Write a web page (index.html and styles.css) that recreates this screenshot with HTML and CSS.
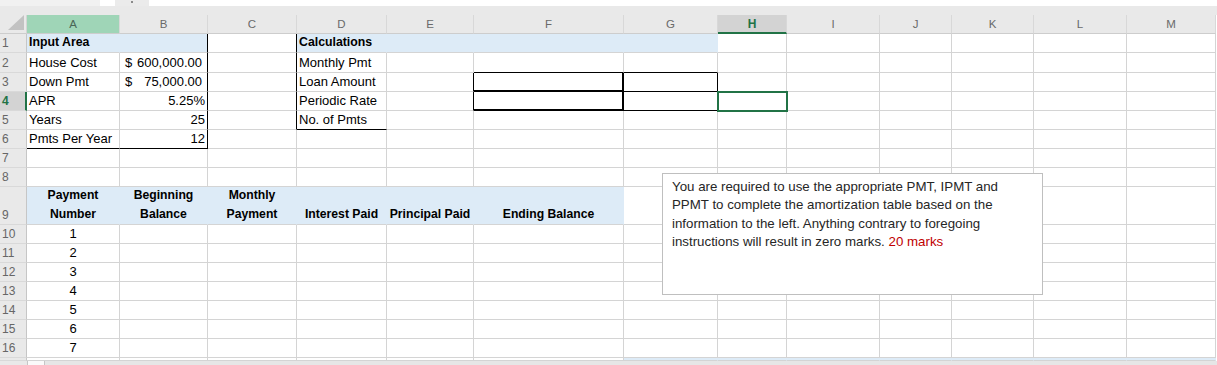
FILE: index.html
```html
<!DOCTYPE html>
<html lang="en">
<head>
  <meta charset="UTF-8">
  <meta name="viewport" content="width=device-width, initial-scale=1.0">
  <title>Amortization Table</title>
  <link rel="stylesheet" href="styles.css">
</head>
<body>
  <div class="formula-edge">
    <div class="name-box"></div>
    <div class="fx-gap"></div>
    <div class="fx-btn"><span></span></div>
  </div>
  <div class="band"></div>

  <div class="sheet">
    <!-- column headers -->
    <div class="corner"><div class="tri"></div></div>
    <div class="colhead picked">A</div>
    <div class="colhead">B</div>
    <div class="colhead">C</div>
    <div class="colhead">D</div>
    <div class="colhead">E</div>
    <div class="colhead">F</div>
    <div class="colhead">G</div>
    <div class="colhead active">H</div>
    <div class="colhead">I</div>
    <div class="colhead">J</div>
    <div class="colhead">K</div>
    <div class="colhead">L</div>
    <div class="colhead">M</div>

    <!-- row 1 -->
    <div class="rowhead">1</div>
    <div class="cell fill bold">Input Area</div>
    <div class="cell fill br"></div>
    <div class="cell br"></div>
    <div class="cell fill bold">Calculations</div>
    <div class="cell fill"></div>
    <div class="cell fill"></div>
    <div class="cell fill"></div>
    <div class="cell"></div>
    <div class="cell"></div>
    <div class="cell"></div>
    <div class="cell"></div>
    <div class="cell"></div>
    <div class="cell"></div>

    <!-- row 2 -->
    <div class="rowhead">2</div>
    <div class="cell">House Cost</div>
    <div class="cell acct br"><span>$</span><span>600,000.00</span></div>
    <div class="cell br"></div>
    <div class="cell">Monthly Pmt</div>
    <div class="cell"></div>
    <div class="cell bb"></div>
    <div class="cell bb"></div>
    <div class="cell"></div>
    <div class="cell"></div>
    <div class="cell"></div>
    <div class="cell"></div>
    <div class="cell"></div>
    <div class="cell"></div>

    <!-- row 3 -->
    <div class="rowhead">3</div>
    <div class="cell">Down Pmt</div>
    <div class="cell acct br"><span>$</span><span>75,000.00</span></div>
    <div class="cell br"></div>
    <div class="cell">Loan Amount</div>
    <div class="cell br"></div>
    <div class="cell br bb thick"></div>
    <div class="cell br bb"></div>
    <div class="cell"></div>
    <div class="cell"></div>
    <div class="cell"></div>
    <div class="cell"></div>
    <div class="cell"></div>
    <div class="cell"></div>

    <!-- row 4 -->
    <div class="rowhead active">4</div>
    <div class="cell">APR</div>
    <div class="cell num br">5.25%</div>
    <div class="cell br"></div>
    <div class="cell">Periodic Rate</div>
    <div class="cell br"></div>
    <div class="cell br bb thick"></div>
    <div class="cell br bb"></div>
    <div class="cell selected"></div>
    <div class="cell"></div>
    <div class="cell"></div>
    <div class="cell"></div>
    <div class="cell"></div>
    <div class="cell"></div>

    <!-- row 5 -->
    <div class="rowhead">5</div>
    <div class="cell">Years</div>
    <div class="cell num br">25</div>
    <div class="cell br"></div>
    <div class="cell bb">No. of Pmts</div>
    <div class="cell"></div>
    <div class="cell"></div>
    <div class="cell"></div>
    <div class="cell"></div>
    <div class="cell"></div>
    <div class="cell"></div>
    <div class="cell"></div>
    <div class="cell"></div>
    <div class="cell"></div>

    <!-- row 6 -->
    <div class="rowhead">6</div>
    <div class="cell bb">Pmts Per Year</div>
    <div class="cell num br bb">12</div>
    <div class="cell"></div>
    <div class="cell"></div>
    <div class="cell"></div>
    <div class="cell"></div>
    <div class="cell"></div>
    <div class="cell"></div>
    <div class="cell"></div>
    <div class="cell"></div>
    <div class="cell"></div>
    <div class="cell"></div>
    <div class="cell"></div>

    <!-- row 7 -->
    <div class="rowhead">7</div>
    <div class="cell"></div>
    <div class="cell"></div>
    <div class="cell"></div>
    <div class="cell"></div>
    <div class="cell"></div>
    <div class="cell"></div>
    <div class="cell"></div>
    <div class="cell"></div>
    <div class="cell"></div>
    <div class="cell"></div>
    <div class="cell"></div>
    <div class="cell"></div>
    <div class="cell"></div>

    <!-- row 8 -->
    <div class="rowhead">8</div>
    <div class="cell"></div>
    <div class="cell"></div>
    <div class="cell"></div>
    <div class="cell"></div>
    <div class="cell"></div>
    <div class="cell"></div>
    <div class="cell"></div>
    <div class="cell"></div>
    <div class="cell"></div>
    <div class="cell"></div>
    <div class="cell"></div>
    <div class="cell"></div>
    <div class="cell"></div>

    <!-- row 9: table headings -->
    <div class="rowhead">9</div>
    <div class="cell fill heading">Payment<br>Number</div>
    <div class="cell fill heading">Beginning<br>Balance</div>
    <div class="cell fill heading">Monthly<br>Payment</div>
    <div class="cell fill heading">Interest Paid</div>
    <div class="cell fill heading">Principal Paid</div>
    <div class="cell fill heading">Ending Balance</div>
    <div class="cell"></div>
    <div class="cell"></div>
    <div class="cell"></div>
    <div class="cell"></div>
    <div class="cell"></div>
    <div class="cell"></div>
    <div class="cell"></div>

    <!-- rows 10-16 -->
    <div class="rowhead">10</div>
    <div class="cell center">1</div>
    <div class="cell"></div><div class="cell"></div><div class="cell"></div><div class="cell"></div><div class="cell"></div>
    <div class="cell"></div><div class="cell"></div><div class="cell"></div><div class="cell"></div><div class="cell"></div><div class="cell"></div><div class="cell"></div>

    <div class="rowhead">11</div>
    <div class="cell center">2</div>
    <div class="cell"></div><div class="cell"></div><div class="cell"></div><div class="cell"></div><div class="cell"></div>
    <div class="cell"></div><div class="cell"></div><div class="cell"></div><div class="cell"></div><div class="cell"></div><div class="cell"></div><div class="cell"></div>

    <div class="rowhead">12</div>
    <div class="cell center">3</div>
    <div class="cell"></div><div class="cell"></div><div class="cell"></div><div class="cell"></div><div class="cell"></div>
    <div class="cell"></div><div class="cell"></div><div class="cell"></div><div class="cell"></div><div class="cell"></div><div class="cell"></div><div class="cell"></div>

    <div class="rowhead">13</div>
    <div class="cell center">4</div>
    <div class="cell"></div><div class="cell"></div><div class="cell"></div><div class="cell"></div><div class="cell"></div>
    <div class="cell"></div><div class="cell"></div><div class="cell"></div><div class="cell"></div><div class="cell"></div><div class="cell"></div><div class="cell"></div>

    <div class="rowhead">14</div>
    <div class="cell center">5</div>
    <div class="cell"></div><div class="cell"></div><div class="cell"></div><div class="cell"></div><div class="cell"></div>
    <div class="cell"></div><div class="cell"></div><div class="cell"></div><div class="cell"></div><div class="cell"></div><div class="cell"></div><div class="cell"></div>

    <div class="rowhead">15</div>
    <div class="cell center">6</div>
    <div class="cell"></div><div class="cell"></div><div class="cell"></div><div class="cell"></div><div class="cell"></div>
    <div class="cell"></div><div class="cell"></div><div class="cell"></div><div class="cell"></div><div class="cell"></div><div class="cell"></div><div class="cell"></div>

    <div class="rowhead">16</div>
    <div class="cell center">7</div>
    <div class="cell"></div><div class="cell"></div><div class="cell"></div><div class="cell"></div><div class="cell"></div>
    <div class="cell"></div><div class="cell"></div><div class="cell"></div><div class="cell"></div><div class="cell"></div><div class="cell"></div><div class="cell"></div>

    <!-- row 17 (cut off) -->
    <div class="rowhead"></div>
    <div class="cell"></div><div class="cell"></div><div class="cell"></div><div class="cell"></div><div class="cell"></div><div class="cell"></div>
    <div class="cell fill"></div><div class="cell fill"></div><div class="cell fill"></div><div class="cell fill"></div>
    <div class="cell fill"></div><div class="cell fill"></div><div class="cell fill"></div>
  </div>

  <div class="hscroll">
    <div class="hscroll-side"></div>
    <div class="tab-btn"></div>
    <div class="hscroll-bar"></div>
  </div>

  <div class="note">
    You are required to use the appropriate PMT, IPMT and<br>
    PPMT to complete the amortization table based on the<br>
    information to the left. Anything contrary to foregoing<br>
    instructions will result in zero marks. <span class="red">20 marks</span>
  </div>
</body>
</html>
```

FILE: styles.css
```css
body {
  margin: 0;
  width: 1217px;
  height: 365px;
  overflow: hidden;
  position: relative;
  background-color: #fff;
  font-family: "Liberation Sans", Arial, sans-serif;
  color: #000;
}

.formula-edge {
  display: flex;
  height: 6px;
  background-color: #fff;
}

.name-box {
  width: 100px;
  background-color: #f1f1f1;
}

.fx-gap {
  width: 15px;
}

.fx-btn {
  width: 34px;
  background-color: #ebebeb;
  display: flex;
  justify-content: center;
}

.fx-btn span {
  width: 2px;
  height: 2px;
  margin-top: 1px;
  background-color: #8a8a8a;
}

.band {
  height: 9px;
  background-color: #e9e9e9;
}

.sheet {
  display: grid;
  grid-template-columns: 27px 93px 88px 89px 90px 87px 150px 94px 69px 93px 72px 82px 93px 89px;
  grid-template-rows: 19px 19px 20px repeat(6, 19px) 38px repeat(7, 19px) 3px;
}

.corner {
  background-color: #e9e9e9;
  border-right: 1px solid #d5d5d5;
  border-bottom: 1px solid #cdcdcd;
  display: flex;
  justify-content: flex-end;
  align-items: flex-end;
  padding: 0 2px 3px 0;
}

.tri {
  width: 16px;
  height: 15px;
  background-color: #c2c2c2;
  clip-path: polygon(100% 0, 100% 100%, 0 100%);
}

.colhead {
  background-color: #e9e9e9;
  border-right: 1px solid #d8d8d8;
  border-bottom: 1px solid #cdcdcd;
  color: #6a6a6a;
  font-size: 11.5px;
  display: flex;
  justify-content: center;
  align-items: center;
}

.colhead.picked {
  background-color: #9fd5b7;
  color: #4a6656;
}

.colhead.active {
  background-color: #d3d3d3;
  color: #217346;
  font-weight: bold;
  font-size: 12px;
  border-bottom: 2px solid #217346;
}

.rowhead {
  background-color: #e9e9e9;
  border-right: 1px solid #c6c6c6;
  border-bottom: 1px solid #d9d9d9;
  color: #666;
  font-size: 12px;
  line-height: 14px;
  display: flex;
  align-items: flex-end;
  padding: 0 0 2px 2px;
}

.rowhead.active {
  background-color: #d3d3d3;
  color: #217346;
  font-weight: bold;
  border-right: 2px solid #217346;
}

.cell {
  border-right: 1px solid #d4d4d4;
  border-bottom: 1px solid #d4d4d4;
  font-size: 13px;
  line-height: 15px;
  padding: 0 2px 2px 2px;
  display: flex;
  align-items: flex-end;
  white-space: nowrap;
  min-width: 0;
}

.fill {
  background-color: #ddebf7;
  border-right-color: #ddebf7;
}

.br {
  border-right-color: #000;
}

.bb {
  border-bottom-color: #000;
}

.thick {
  border-right-width: 2px;
  border-bottom-width: 2px;
}

.bold {
  font-weight: bold;
  font-size: 12.3px;
}

.num {
  justify-content: flex-end;
}

.acct {
  justify-content: space-between;
  padding: 0 5px 2px 5px;
}

.center {
  justify-content: center;
}

.heading {
  justify-content: center;
  text-align: center;
  font-weight: bold;
  font-size: 12.2px;
  line-height: 19px;
  padding-bottom: 0;
}

.selected {
  outline: 2px solid #217346;
  outline-offset: -1px;
  z-index: 1;
}

.hscroll {
  display: flex;
  height: 4px;
}

.hscroll-side {
  width: 27px;
  background-color: #e9e9e9;
}

.tab-btn {
  width: 16px;
  background-color: #fafafa;
  border-left: 1px solid #c6c6c6;
  border-right: 1px solid #c6c6c6;
}

.hscroll-bar {
  flex: 1;
  background-color: #e6e6e6;
}

.note {
  position: absolute;
  left: 662px;
  top: 173px;
  width: 381px;
  height: 122px;
  box-sizing: border-box;
  border: 1px solid #bfbfbf;
  background-color: #fff;
  padding: 4px 9px;
  font-size: 13.3px;
  line-height: 18.3px;
  color: #262626;
  white-space: nowrap;
}

.red {
  color: #c00000;
}
```
